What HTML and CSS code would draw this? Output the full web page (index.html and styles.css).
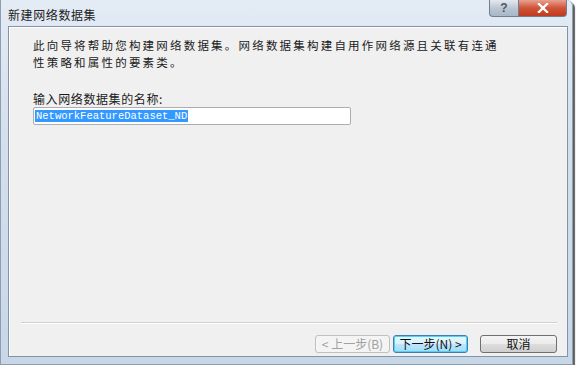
FILE: index.html
```html
<!DOCTYPE html>
<html>
<head>
  <meta charset="utf-8">
  <meta name="viewport" content="width=device-width">
  <title>新建网络数据集</title>
  <link rel="stylesheet" href="styles.css">
</head>
<body>

  <div class="window">
    <div class="titlebar">
      <span class="title">新建网络数据集</span>
      <div class="caption">
        <span class="cap-help">?</span>
        <span class="cap-close">
          <svg width="12" height="10" viewBox="0 0 12 10">
            <path d="M2 1 L10 9 M10 1 L2 9" stroke="#fff" stroke-width="2.4" stroke-linecap="square"/>
          </svg>
        </span>
      </div>
    </div>

    <div class="client">
      <p class="intro">此向导将帮助您构建网络数据集。网络数据集构建自用作网络源且关联有连通<br>性策略和属性的要素类。</p>

      <div class="label">输入网络数据集的名称:</div>
      <div class="field"><span class="sel">NetworkFeatureDataset_ND</span></div>

      <div class="fill"></div>
      <div class="sep"></div>

      <div class="buttons">
        <button class="btn" disabled>&lt; 上一步(B)</button>
        <button class="btn focus">下一步(N) &gt;</button>
        <button class="btn cancel">取消</button>
      </div>
    </div>
  </div>

</body>
</html>
```

FILE: styles.css
```css
body {
  margin: 0;
  background: #fff;
  font-family: "Noto Sans CJK SC", "Liberation Sans", sans-serif;
  color: #1a1a1a;
}
.window {
  width: 573px;
  height: 365px;
  box-sizing: border-box;
  padding: 0 4px 7px 7px;
  display: flex;
  flex-direction: column;
  background: linear-gradient(#e3ebf5, #d3dfec 40%, #c8d7e8);
  border: 1px solid #8d9db2;
  border-top: none;
  border-radius: 0 6px 0 0;
  box-shadow: 2px 2px 1px rgba(40, 40, 40, 0.75);
}
.titlebar {
  height: 26px;
  display: flex;
  align-items: flex-start;
  justify-content: space-between;
}
.title {
  margin-top: 6px;
  font-size: 12px;
  letter-spacing: 0.6px;
  color: #222;
}
.caption {
  display: flex;
  margin-right: 1px;
}
.cap-help, .cap-close {
  height: 17px;
  display: flex;
  align-items: center;
  justify-content: center;
  border: 1px solid #6f7f93;
  border-top: none;
  box-sizing: border-box;
}
.cap-help {
  width: 29px;
  border-radius: 0 0 0 4px;
  border-right: none;
  background: linear-gradient(#e4e9ef, #b9c4d1 55%, #a9b6c6);
  color: #4a5668;
  font: bold 12px "Liberation Sans", sans-serif;
}
.cap-close {
  width: 49px;
  border-radius: 0 0 4px 0;
  background: linear-gradient(#e9a190, #cf5438 50%, #c03a1e);
}
.client {
  flex: 1;
  display: flex;
  flex-direction: column;
  background: #f0f0f0;
  border: 1px solid #8393a8;
  box-shadow: inset 1px 1px 0 #fff;
  padding: 0 10px 3px 24px;
}
.intro {
  margin: 10px 0 0;
  font-size: 11.5px;
  line-height: 17px;
  letter-spacing: 2.2px;
}
.label {
  margin-top: 21px;
  font-size: 12px;
  line-height: 14px;
  letter-spacing: 0.6px;
}
.field {
  margin-top: 1px;
  width: 318px;
  height: 18px;
  box-sizing: border-box;
  border: 1px solid #abadb3;
  border-radius: 2px;
  background: #fff;
  padding: 2px 1px;
  display: flex;
}
.sel {
  background: #3399ff;
  color: #fff;
  font: 10.5px/12px "Liberation Mono", monospace;
  padding: 0 1px;
}
.fill {
  flex: 1;
}
.sep {
  margin-left: -12px;
  border-top: 1px solid #d0d0d0;
  border-bottom: 1px solid #fff;
}
.buttons {
  display: flex;
  justify-content: flex-end;
  margin-top: 11px;
}
.btn {
  width: 75px;
  height: 18px;
  margin-left: 3px;
  padding: 0;
  font-family: "Noto Sans CJK SC", sans-serif;
  font-size: 12px;
  line-height: 14px;
  color: #111;
  border: 1px solid #707070;
  border-radius: 3px;
  background: linear-gradient(#f4f4f4, #ebebeb 50%, #dddddd 51%, #cfcfcf);
}
.btn:disabled {
  color: #a0a0a0;
  border-color: #c0c0c0;
  background: #f4f4f4;
}
.btn.focus {
  border-color: #3c7fb1;
  background: linear-gradient(#eaf6fd, #d9f0fc 50%, #bee6fd 51%, #a7d9f5);
  box-shadow: inset 0 0 0 1px #48d5f8;
}
.btn.cancel {
  width: 77px;
  margin-left: 12px;
}
```
